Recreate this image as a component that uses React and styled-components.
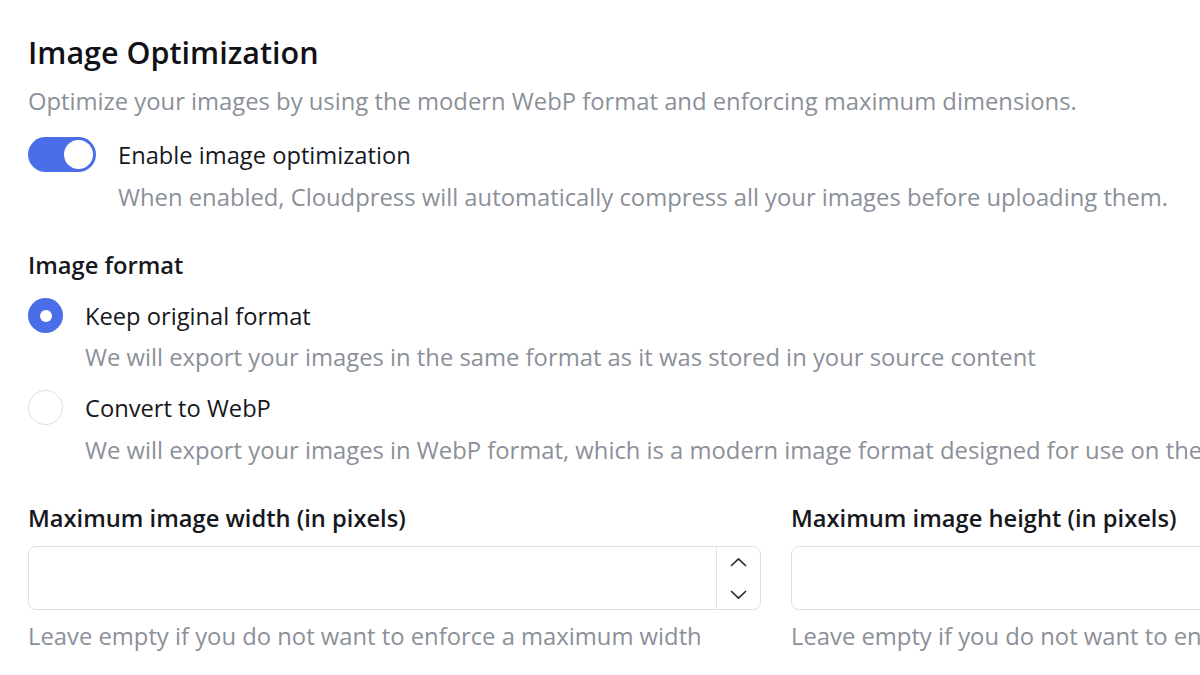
import React from 'react';
import styled, { createGlobalStyle } from 'styled-components';

const GlobalStyle = createGlobalStyle`
    html, body {
        margin : 0;
        padding : 0;
        background : #ffffff;
        overflow : hidden;
    }
    body {
        font-family : "Open Sans", "Noto Sans", sans-serif;
        color : #16181d;
    }
`;

const Page = styled.div`
    width : 1496px;
    padding : 34px 0 0 28px;
    display : flex;
    flex-direction : column;
`;

const Title = styled.h2`
    margin : 0;
    font-size : 30.5px;
    line-height : 36px;
    font-weight : 600;
    color : #111216;
`;

const Muted = styled.p`
    margin : ${(p) => p.$mt || 0}px 0 0 ${(p) => p.$ml || 0}px;
    font-size : 23.8px;
    line-height : 32px;
    color : #8b9099;
    white-space : nowrap;
`;

const ToggleRow = styled.label`
    margin-top : 20px;
    display : flex;
    align-items : center;
    gap : 22px;
    cursor : pointer;
`;

const Track = styled.span`
    width : 68px;
    height : 35px;
    border-radius : 18px;
    background : ${(p) => (p.$on ? '#4a6ee8' : '#d5d8dd')};
    display : flex;
    align-items : center;
    justify-content : ${(p) => (p.$on ? 'flex-end' : 'flex-start')};
    padding : 0 3px;
    box-sizing : border-box;
`;

const Knob = styled.span`
    width : 29px;
    height : 29px;
    border-radius : 50%;
    background : #ffffff;
`;

const OptionText = styled.span`
    font-size : 23.7px;
    line-height : 32px;
    color : #16181d;
`;

const GroupLabel = styled.div`
    margin-top : ${(p) => p.$mt || 0}px;
    font-size : 23.7px;
    line-height : 32px;
    font-weight : 600;
    color : #16181d;
`;

const RadioRow = styled.label`
    margin-top : 17px;
    display : flex;
    align-items : center;
    gap : 22px;
    cursor : pointer;
`;

const RadioDot = styled.span`
    width : 35px;
    height : 35px;
    border-radius : 50%;
    box-sizing : border-box;
    flex-shrink : 0;
    background : ${(p) => (p.$checked ? '#4a6ee8' : '#ffffff')};
    border : ${(p) => (p.$checked ? 'none' : '1.5px solid #dcdee2')};
    display : flex;
    align-items : center;
    justify-content : center;

    &::after {
        content : '';
        width : 12px;
        height : 12px;
        border-radius : 50%;
        background : #ffffff;
        display : ${(p) => (p.$checked ? 'block' : 'none')};
    }
`;

const Fields = styled.div`
    margin-top : 36px;
    display : grid;
    grid-template-columns : 733px 733px;
    column-gap : 30px;
`;

const Field = styled.div`
    display : flex;
    flex-direction : column;
`;

const NumberBox = styled.div`
    margin-top : 12px;
    height : 64px;
    border : 1.5px solid #dcdfe3;
    border-radius : 8px;
    box-sizing : border-box;
    display : flex;
`;

const NumberInput = styled.input`
    flex : 1;
    min-width : 0;
    border : none;
    outline : none;
    background : transparent;
    font-family : inherit;
    font-size : 23px;
    padding : 0 16px;
    border-radius : 8px;
`;

const Spinner = styled.div`
    width : 43px;
    border-left : 1.5px solid #e3e5e8;
    display : flex;
    flex-direction : column;
    align-items : center;
    justify-content : center;
    gap : 23px;
`;

const Chevron = ({ up }) => (
    <svg width="17" height="10" viewBox="0 0 17 10" fill="none">
        <path
            d={up ? 'M1.5 8.5 L8.5 1.8 L15.5 8.5' : 'M1.5 1.5 L8.5 8.2 L15.5 1.5'}
            stroke="#2b2e33"
            strokeWidth="1.7"
            strokeLinecap="round"
            strokeLinejoin="round"
        />
    </svg>
);

function App() {
    return (
        <>
            <GlobalStyle />
            <Page>
                <Title>Image Optimization</Title>
                <Muted $mt={15}>
                    Optimize your images by using the modern WebP format and enforcing maximum dimensions.
                </Muted>

                <ToggleRow>
                    <Track $on><Knob /></Track>
                    <OptionText>Enable image optimization</OptionText>
                </ToggleRow>
                <Muted $mt={9} $ml={90}>
                    When enabled, Cloudpress will automatically compress all your images before uploading them.
                </Muted>

                <GroupLabel $mt={36}>Image format</GroupLabel>

                <RadioRow>
                    <RadioDot $checked />
                    <OptionText>Keep original format</OptionText>
                </RadioRow>
                <Muted $mt={8} $ml={57}>
                    We will export your images in the same format as it was stored in your source content
                </Muted>

                <RadioRow>
                    <RadioDot />
                    <OptionText>Convert to WebP</OptionText>
                </RadioRow>
                <Muted $mt={9} $ml={57}>
                    We will export your images in WebP format, which is a modern image format designed for use on the web.
                </Muted>

                <Fields>
                    <Field>
                        <GroupLabel>Maximum image width (in pixels)</GroupLabel>
                        <NumberBox>
                            <NumberInput type="text" />
                            <Spinner>
                                <Chevron up />
                                <Chevron />
                            </Spinner>
                        </NumberBox>
                        <Muted $mt={10}>Leave empty if you do not want to enforce a maximum width</Muted>
                    </Field>
                    <Field>
                        <GroupLabel>Maximum image height (in pixels)</GroupLabel>
                        <NumberBox>
                            <NumberInput type="text" />
                        </NumberBox>
                        <Muted $mt={10}>Leave empty if you do not want to enforce a maximum height</Muted>
                    </Field>
                </Fields>
            </Page>
        </>
    );
}

export default App;
